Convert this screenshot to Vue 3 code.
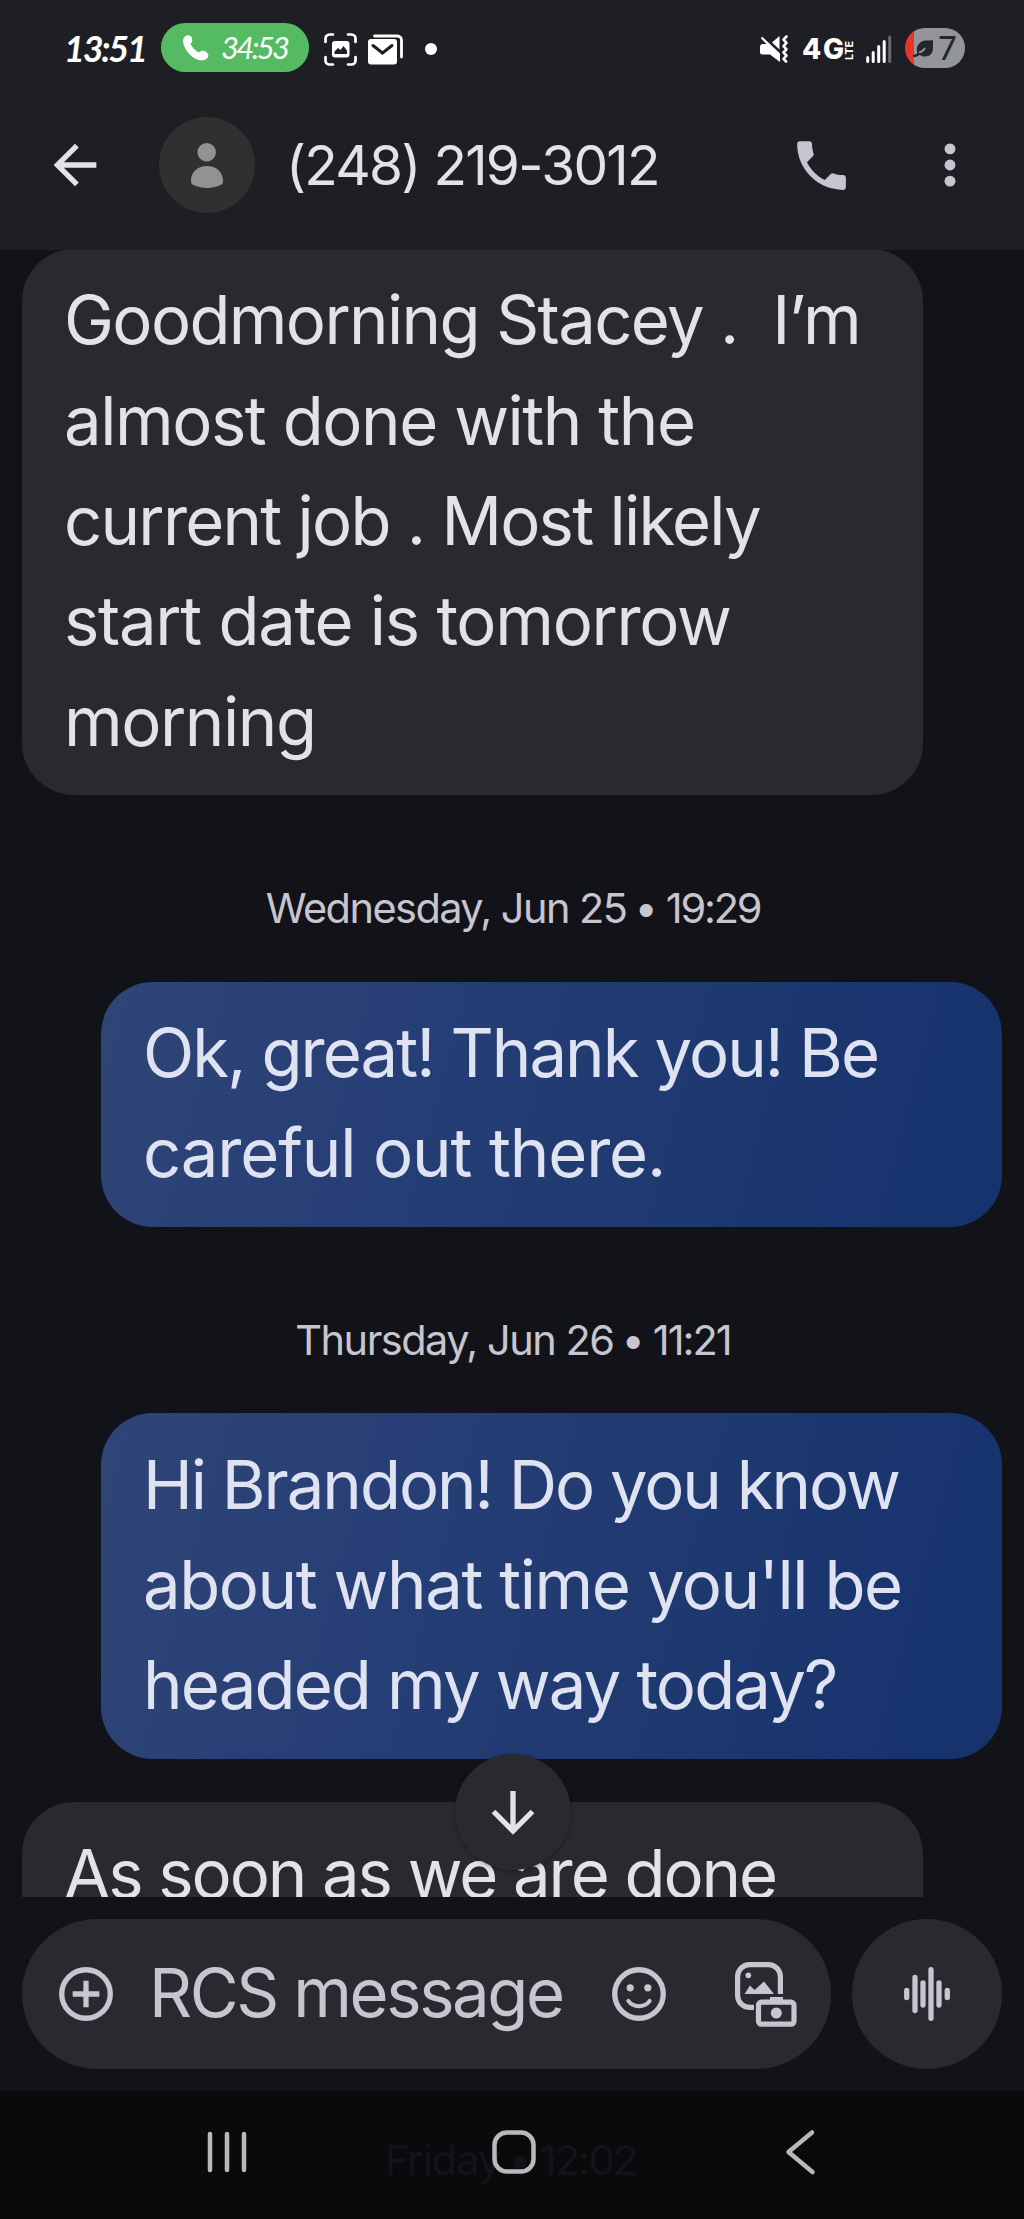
<template>
  <div class="phone">
    <!-- Status bar -->
    <div class="status-bar">
      <span class="clock" :style="fit('13:51', 78, 'italic 700 36px Lato')">13:51</span>
      <div class="call-pill">
        <svg class="pill-phone" viewBox="0 0 26 26">
          <path d="M2 1.500C4-.3 7-.2 8.500 2.200c1.600 2.700.7 4.800-1 6.500 1.400 3.400 4.300 6.600 8.300 8.700 2.200-1.900 4.900-2.200 7.200-.7 2.500 1.700 3.300 4.500 1.200 6.600-2.700 2.700-8.200 2.800-13.200-.4C5.600 19.500.9 13 .1 7.300-.2 4.600.5 2.700 2 1.500z" fill="#fff" />
        </svg>
        <span class="call-time" :style="fit('34:53', 67, 'italic 400 31px Lato')">34:53</span>
      </div>
      <svg class="capture" viewBox="0 0 33 33">
        <path d="M1.500 9V5.500a4 4 0 0 1 4-4H9M24 1.500h3.500a4 4 0 0 1 4 4V9M31.500 24v3.500a4 4 0 0 1-4 4H24M9 31.500H5.500a4 4 0 0 1-4-4V24" fill="none" stroke="#fff" stroke-width="2.700" stroke-linecap="round" />
        <rect x="8" y="8" width="17.500" height="16.500" rx="3" fill="#fff" />
        <path d="M10.500 21v-2.500l3.500-3.500 2.500 2 3-4 3.500 4.500V21z" fill="#1e1f25" />
      </svg>
      <svg class="mail" viewBox="0 0 35 31">
        <path d="M6.500 2h23a4 4 0 0 1 4 4v17" fill="none" stroke="#fff" stroke-width="2.800" stroke-linecap="round" />
        <rect x="0" y="5" width="29" height="25.500" rx="3" fill="#fff" />
        <path d="M5 11.500l9.500 7.500 9.500-7.500" fill="none" stroke="#1e1f25" stroke-width="3" stroke-linecap="round" />
      </svg>
      <span class="more-dot"></span>

      <svg class="mute" viewBox="0 0 28 28">
        <path d="M2 1.500L20 18.500V27L10 19.500H2.500Q0 19.500 0 17v-5Q0 9 3 9h3.500L1 3.500z" fill="#fff" />
        <path d="M19.500 1v13.500L12 7.500z" fill="#fff" />
        <path d="M26.500 1.500l-3 3.200 3 3.200-3 3.200 3 3.200-3 3.200 3 3.200-3 3.200 2.600 2.600" fill="none" stroke="#fff" stroke-width="2.600" stroke-linejoin="round" stroke-linecap="round" />
      </svg>
      <span class="network" :style="fit('4G', 40, '800 28px Inter')">4G</span>
      <span class="lte">LTE</span>
      <svg class="signal" viewBox="0 0 26 28">
        <path d="M1.700 22.500v4M7.200 17.500v9M12.700 11.500v15M18.200 6.500v20" stroke="#fff" stroke-width="3" stroke-linecap="round" />
        <path d="M23.700 2v24.500" stroke="#686970" stroke-width="3" stroke-linecap="round" />
      </svg>
      <div class="battery">
        <svg class="leaf" viewBox="0 0 21 19">
          <path d="M20 1v8c0 5-3 8.500-8 8.500-2.500 0-4.200-.7-5.200-1.800C5 17.400 3 18 1 18c-1.300 0-1.300-2.300 0-2.300 1.500 0 2.500-.5 3.500-1.400C2 7 7 1.500 13 1.500 16 1.500 18 1.500 20 1z" fill="#25262b" />
          <path d="M6 13.500c2.500-.6 4.500-2 6-4.500" fill="none" stroke="#939599" stroke-width="1.700" />
        </svg>
        <span class="level">7</span>
      </div>
    </div>

    <!-- Conversation header -->
    <header class="app-bar">
      <svg class="icon-64 back" viewBox="0 0 24 24">
        <path d="M20 11H7.830l5.590-5.590L12 4l-8 8 8 8 1.410-1.410L7.830 13H20v-2z" />
      </svg>
      <div class="avatar">
        <svg viewBox="0 0 32 45">
          <circle cx="15.700" cy="9.300" r="9.200" />
          <path d="M0 37.500C0 29 7 23 16 23s16 6 16 14.500c0 3-.7 4-3.500 5C25 44 20.500 45 16 45s-9-1-12.500-2.500C.7 41.500 0 40.500 0 37.500z" />
        </svg>
      </div>
      <h1 class="title" :style="fit('(248) 219-3012', 366, '400 55px Inter')">(248) 219-3012</h1>
      <svg class="call" viewBox="0 0 24 24">
        <path d="M6.540 5c.060.890.210 1.760.450 2.590l-1.200 1.200c-.410-1.200-.670-2.470-.760-3.790h1.510m9.860 12.020c.850.240 1.720.390 2.600.450v1.490c-1.320-.090-2.590-.350-3.800-.750l1.200-1.190M7.500 3H4c-.550 0-1 .450-1 1 0 9.390 7.610 17 17 17 .550 0 1-.450 1-1v-3.490c0-.550-.450-1-1-1-1.240 0-2.450-.200-3.570-.570-.100-.040-.210-.050-.310-.050-.260 0-.510.100-.710.290l-2.200 2.200c-2.830-1.450-5.150-3.760-6.590-6.590l2.200-2.200c.280-.280.360-.670.250-1.020C8.700 6.450 8.500 5.250 8.500 4c0-.550-.450-1-1-1z" />
        <path d="M4.500 4.500h3l.5 4-2.200 1.800zM19.500 19.500v-3l-4-.5-1.800 2.200z" />
      </svg>
      <svg class="icon-64" viewBox="0 0 24 24">
        <circle cx="12" cy="5.950" r="2.050" />
        <circle cx="12" cy="12" r="2.050" />
        <circle cx="12" cy="18.050" r="2.050" />
      </svg>
    </header>

    <!-- Messages -->
    <main class="thread">
      <template v-for="(item, i) in thread" :key="i">
        <div v-if="item.date" class="date">
          <span :style="fit(item.date, item.dateWidth, dateFont)">{{ item.date }}</span>
          <span>•</span>
          <span :style="fit(item.time, item.timeWidth, dateFont)">{{ item.time }}</span>
        </div>
        <div v-else class="bubble" :class="item.side">
          <span
            v-for="line in item.lines"
            :key="line.text"
            class="line"
            :style="fit(line.text, line.width, bodyFont)"
          >{{ line.text }}</span>
        </div>
      </template>
    </main>

    <!-- Composer -->
    <footer class="composer">
      <button class="scroll-down">
        <svg viewBox="0 0 44 44">
          <path d="M22 1v39M2.500 21.500L22 41l19.500-19.500" />
        </svg>
      </button>
      <div class="input">
        <svg class="icon-64 outline" viewBox="0 0 24 24">
          <circle cx="12" cy="12" r="9.100" />
          <path d="M12 7v10M7 12h10" />
        </svg>
        <span class="placeholder" :style="fit('RCS message', 408, bodyFont)">RCS message</span>
        <svg class="icon-64 outline emoji" viewBox="0 0 24 24">
          <circle cx="12" cy="12" r="9.100" />
          <path d="M8 14.600c1.800 2.600 6.200 2.600 8 0" stroke-linecap="round" stroke-width="1.500" />
          <circle class="solid" cx="8.700" cy="9.700" r="1.350" />
          <circle class="solid" cx="15.300" cy="9.700" r="1.350" />
        </svg>
        <svg class="gallery" viewBox="0 0 62 65">
          <path d="M19 45.400H14.600a12 12 0 0 1-12-12V14.600a12 12 0 0 1 12-12h18.800a12 12 0 0 1 12 12V32" class="frame" />
          <circle cx="13.300" cy="13.300" r="2.900" />
          <path d="M9.500 32l5.500-8.500 4.500 4.500 9.500-8.500L39 32z" />
          <path d="M35 41v-6h13v6z" />
          <rect x="23.500" y="40.200" width="35.500" height="22" rx="3" class="frame" />
          <circle cx="41.300" cy="51" r="5.500" />
        </svg>
      </div>
      <div class="voice">
        <svg viewBox="0 0 46 54">
          <path d="M2.700 23.500v7M11 10.500v33M19 16v22M27 2.700v48.600M35 16v22M43.300 23.500v7" />
        </svg>
      </div>
    </footer>

    <!-- System navigation -->
    <nav class="nav-bar">
      <div class="ghost-date">
        <span :style="fit('Friday', 113, dateFont)">Friday</span>
        <span>•</span>
        <span :style="fit('12:02', 95, dateFont)">12:02</span>
      </div>
      <svg class="recents" viewBox="0 0 40 44">
        <path d="M3 4v36M20 4v36M37 4v36" />
      </svg>
      <svg class="home" viewBox="0 0 44 44">
        <rect x="2.500" y="2.500" width="39" height="39" rx="12.500" />
      </svg>
      <svg class="nav-back" viewBox="0 0 30 44">
        <path d="M27 2.500L3.500 22 27.500 42" />
      </svg>
    </nav>
  </div>
</template>

<script setup>
const bodyFont = '400 67px Inter';
const dateFont = '400 41.5px Inter';

const thread = [
  {
    side: 'incoming',
    lines: [
      { text: 'Goodmorning Stacey .  I’m', width: 790 },
      { text: 'almost done with the', width: 627 },
      { text: 'current job . Most likely', width: 693 },
      { text: 'start date is tomorrow', width: 663 },
      { text: 'morning', width: 243 }
    ]
  },
  { date: 'Wednesday, Jun 25', dateWidth: 359, time: '19:29', timeWidth: 94 },
  {
    side: 'outgoing',
    lines: [
      { text: 'Ok, great! Thank you! Be', width: 731 },
      { text: 'careful out there.', width: 516 }
    ]
  },
  { date: 'Thursday, Jun 26', dateWidth: 317, time: '11:21', timeWidth: 76 },
  {
    side: 'outgoing',
    lines: [
      { text: 'Hi Brandon! Do you know', width: 751 },
      { text: "about what time you'll be", width: 755 },
      { text: 'headed my way today?', width: 687 }
    ]
  },
  {
    side: 'incoming',
    lines: [{ text: 'As soon as we are done', width: 710 }]
  }
];

const ctx = document.createElement('canvas').getContext('2d');

// Tracking that makes a line of text span the given width
function fit(text, width, font) {
  ctx.font = font;
  const m = ctx.measureText(text);
  const ink = m.actualBoundingBoxRight + m.actualBoundingBoxLeft;
  return { letterSpacing: ((width - ink) / (text.length - 1)).toFixed(3) + 'px' };
}
</script>

<style>
body {
  margin: 0;
  background: #121318;
}
</style>

<style scoped>
.phone {
  width: 1024px;
  height: 2219px;
  display: flex;
  flex-direction: column;
  overflow: hidden;
  background: #121318;
  color: #e3e2e9;
  font-family: Inter, sans-serif;
}

svg {
  display: block;
  flex: none;
  overflow: visible;
}

span,
h1 {
  white-space: pre;
}

/* Status bar */
.status-bar {
  box-sizing: border-box;
  height: 96px;
  display: flex;
  align-items: center;
  padding: 2px 59px 0 64px;
  background: #1e1f25;
  color: #fff;
}

.clock {
  width: 97px;
  margin-top: -2px;
  font: italic 700 36px/48px Lato, sans-serif;
}

.call-pill {
  box-sizing: border-box;
  width: 148px;
  height: 49px;
  margin-top: -3px;
  padding-left: 22px;
  display: flex;
  align-items: center;
  border-radius: 25px;
  background: #55bb63;
}

.pill-phone {
  width: 26px;
  height: 26px;
}

.call-time {
  margin: -2px 0 0 12px;
  font: italic 400 31px/48px Lato, sans-serif;
}

.capture {
  width: 33px;
  height: 33px;
  margin-left: 15px;
}

.mail {
  width: 35px;
  height: 31px;
  margin-left: 11px;
}

.more-dot {
  width: 12px;
  height: 12px;
  margin-left: 22px;
  border-radius: 50%;
  background: #fff;
}

.mute {
  width: 28px;
  height: 28px;
  margin-left: auto;
}

.network {
  width: 42px;
  margin-left: 14px;
  font: 800 28px/30px Inter, sans-serif;
}

.lte {
  height: 22px;
  writing-mode: vertical-rl;
  transform: rotate(180deg);
  font: 700 11px/10px Inter, sans-serif;
}

.signal {
  width: 26px;
  height: 28px;
  margin-left: 12px;
}

.battery {
  box-sizing: border-box;
  width: 60px;
  height: 40px;
  margin: -2px 0 0 13px;
  padding-left: 8px;
  display: flex;
  align-items: center;
  border-radius: 20px;
  background: linear-gradient(90deg, #e8352b 9px, #939599 9px);
}

.leaf {
  width: 21px;
  height: 19px;
}

.level {
  margin-left: 4px;
  color: #25262b;
  font: 500 32px/40px Lato, sans-serif;
}

/* Header */
.app-bar {
  box-sizing: border-box;
  height: 154px;
  display: flex;
  align-items: center;
  padding: 0 42px 16px 43px;
  background: #1e1f25;
  fill: #c7c5d0;
}

.icon-64 {
  width: 64px;
  height: 64px;
}

.back {
  fill: #e3e2e9;
}

.avatar {
  box-sizing: border-box;
  width: 96px;
  height: 96px;
  margin-left: 52px;
  padding-top: 26px;
  border-radius: 50%;
  background: #303030;
  fill: #919392;
}

.avatar svg {
  width: 32px;
  height: 45px;
  margin: 0 auto;
}

.title {
  margin: 0 0 0 31px;
  font: 400 55px/70px Inter, sans-serif;
}

.call {
  width: 65px;
  height: 65px;
  margin-left: auto;
  margin-right: 64px;
}

/* Thread */
.thread {
  height: 1648px;
  margin-top: -1px;
  display: flex;
  flex-direction: column;
  flex: none;
  overflow: hidden;
  clip-path: inset(1px 0 0 0);
}

.bubble {
  box-sizing: border-box;
  width: 901px;
  flex: none;
  padding: 21.400px 42px 23px;
  border-radius: 52px;
  font-size: 67px;
  line-height: 100.300px;
}

.line {
  display: block;
}

.incoming {
  margin-left: 22px;
  background: #292a2f;
}

.outgoing {
  margin-left: 101px;
  background: linear-gradient(105deg, #2f4577 0%, #263e76 35%, #1d376f 70%, #17336e 92%);
  color: #dfe2f0;
}

.bubble + .bubble {
  margin-top: 43.700px;
}

.date,
.ghost-date {
  display: flex;
  justify-content: center;
  gap: 8px;
  font: 400 41.500px/40px Inter, sans-serif;
}

.date {
  box-sizing: border-box;
  height: 186.700px;
  flex: none;
  padding: 93.500px 0 0 2px;
  color: #c7c5d0;
}

/* Composer */
.composer {
  box-sizing: border-box;
  position: relative;
  height: 194px;
  flex: none;
  display: flex;
  gap: 21px;
  padding: 22px;
  background: #121318;
}

.scroll-down {
  position: absolute;
  left: 455px;
  top: -143px;
  width: 116px;
  height: 116px;
  padding: 0;
  display: flex;
  align-items: center;
  justify-content: center;
  border: 0;
  border-radius: 50%;
  background: #292a2f;
  box-shadow: 0 1px 4px rgba(0, 0, 0, 0.35);
}

.scroll-down svg {
  width: 44px;
  height: 44px;
  fill: none;
  stroke: #e3e2e9;
  stroke-width: 5.300px;
}

.input {
  box-sizing: border-box;
  width: 809px;
  height: 150px;
  padding: 0 34px 0 32px;
  display: flex;
  align-items: center;
  border-radius: 75px;
  background: #292a2f;
}

.outline {
  fill: none;
  stroke: #c7c5d0;
  stroke-width: 2px;
}

.outline .solid {
  fill: #c7c5d0;
  stroke: none;
}

.placeholder {
  margin: -2px 0 0 31px;
  color: #c7c5d0;
  font-size: 67px;
  line-height: 100px;
}

.emoji {
  margin-left: auto;
}

.gallery {
  width: 62px;
  height: 65px;
  margin-left: 64px;
  fill: #c7c5d0;
}

.gallery .frame {
  fill: none;
  stroke: #c7c5d0;
  stroke-width: 5.200px;
}

.voice {
  width: 150px;
  height: 150px;
  display: flex;
  align-items: center;
  justify-content: center;
  border-radius: 50%;
  background: #292a2f;
}

.voice svg {
  width: 46px;
  height: 54px;
  stroke: #c7c5d0;
  stroke-width: 5.300px;
  stroke-linecap: round;
}

/* Navigation */
.nav-bar {
  box-sizing: border-box;
  position: relative;
  height: 128px;
  flex: none;
  display: flex;
  align-items: center;
  padding: 0 209px 6px 207px;
  background: #0a0a0c;
}

.nav-bar svg {
  position: relative;
  height: 44px;
  fill: none;
  stroke: #b9b9bb;
  stroke-width: 4.500px;
  stroke-linecap: round;
  stroke-linejoin: round;
}

.recents {
  width: 40px;
}

.home {
  width: 44px;
  margin-left: 245px;
}

.nav-back {
  width: 30px;
  margin-left: auto;
}

.ghost-date {
  position: absolute;
  left: 385px;
  top: 49px;
  color: #131419;
}
</style>
